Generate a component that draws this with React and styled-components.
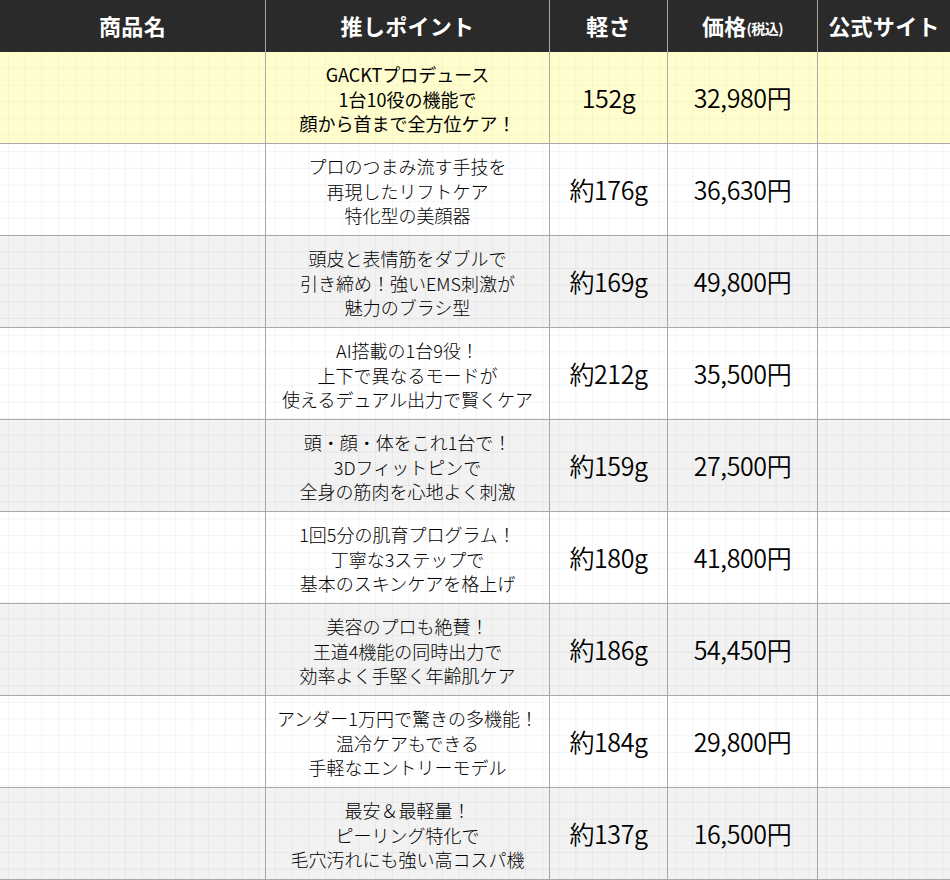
import React from 'react';
import styled, { createGlobalStyle } from 'styled-components';

const GlobalStyle = createGlobalStyle`
  html, body {
    margin: 0;
    padding: 0;
    background: #ffffff;
  }
  body {
    font-family: "Noto Sans CJK JP", "Noto Sans", sans-serif;
    color: #1a1a1a;
  }
`;

const Table = styled.div`
  width: 950px;
  display: grid;
  grid-template-columns: 265px 284px 118px 150px 1fr;
  background-color: #ffffff;
  background-image:
    linear-gradient(to right, rgba(0, 0, 0, 0.042) 1px, transparent 1px),
    linear-gradient(to bottom, rgba(0, 0, 0, 0.042) 1px, transparent 1px);
  background-size: 16.7px 16.7px;
  background-position: 8px 1px;
`;

const HeadCell = styled.div`
  height: 52px;
  background: #2a2a2a;
  color: #ffffff;
  font-weight: 700;
  font-size: 22px;
  display: flex;
  align-items: center;
  justify-content: center;
  letter-spacing: 0.3px;
  border-left: ${(p) => (p.$first ? 'none' : '1px solid #a8a8a8')};
  padding-bottom: 2px;
  box-sizing: border-box;

  small {
    font-size: 14px;
    letter-spacing: -0.5px;
    margin-top: 5px;
  }
`;

const tints = {
  yellow: 'rgba(255, 250, 120, 0.36)',
  white: 'transparent',
  grey: 'rgba(0, 0, 0, 0.05)',
};

const Cell = styled.div`
  height: 92px;
  box-sizing: border-box;
  border-bottom: 1px solid #a8a8a8;
  border-left: ${(p) => (p.$first ? 'none' : '1px solid #a8a8a8')};
  background: ${(p) => tints[p.$tint]};
  display: flex;
  align-items: center;
  justify-content: center;
  text-align: center;
`;

const Point = styled(Cell)`
  font-size: 18px;
  line-height: 24.5px;
  font-weight: ${(p) => (p.$tint === 'yellow' ? 400 : 300)};
  color: #000000;
  padding-top: 3px;
`;

const Value = styled(Cell)`
  font-size: 25px;
  font-weight: 350;
  color: #000000;
  letter-spacing: -0.4px;
  padding-bottom: 2px;
`;

const rows = [
  { point: ['GACKTプロデュース', '1台10役の機能で', '顔から首まで全方位ケア！'], weight: '152g', price: '32,980円' },
  { point: ['プロのつまみ流す手技を', '再現したリフトケア', '特化型の美顔器'], weight: '約176g', price: '36,630円' },
  { point: ['頭皮と表情筋をダブルで', '引き締め！強いEMS刺激が', '魅力のブラシ型'], weight: '約169g', price: '49,800円' },
  { point: ['AI搭載の1台9役！', '上下で異なるモードが', '使えるデュアル出力で賢くケア'], weight: '約212g', price: '35,500円' },
  { point: ['頭・顔・体をこれ1台で！', '3Dフィットピンで', '全身の筋肉を心地よく刺激'], weight: '約159g', price: '27,500円' },
  { point: ['1回5分の肌育プログラム！', '丁寧な3ステップで', '基本のスキンケアを格上げ'], weight: '約180g', price: '41,800円' },
  { point: ['美容のプロも絶賛！', '王道4機能の同時出力で', '効率よく手堅く年齢肌ケア'], weight: '約186g', price: '54,450円' },
  { point: ['アンダー1万円で驚きの多機能！', '温冷ケアもできる', '手軽なエントリーモデル'], weight: '約184g', price: '29,800円' },
  { point: ['最安＆最軽量！', 'ピーリング特化で', '毛穴汚れにも強い高コスパ機'], weight: '約137g', price: '16,500円' },
];

const App = () => {
  return (
    <>
      <GlobalStyle />
      <Table>
        <HeadCell $first>商品名</HeadCell>
        <HeadCell>推しポイント</HeadCell>
        <HeadCell>軽さ</HeadCell>
        <HeadCell>
          価格<small>(税込)</small>
        </HeadCell>
        <HeadCell>公式サイト</HeadCell>

        {rows.map((row, i) => {
          const tint = i === 0 ? 'yellow' : i % 2 === 0 ? 'grey' : 'white';
          return (
            <React.Fragment key={row.price}>
              <Cell $first $tint={tint} />
              <Point $tint={tint}>
                <div>
                  {row.point.map((line) => (
                    <div key={line}>{line}</div>
                  ))}
                </div>
              </Point>
              <Value $tint={tint}>{row.weight}</Value>
              <Value $tint={tint}>{row.price}</Value>
              <Cell $tint={tint} />
            </React.Fragment>
          );
        })}
      </Table>
    </>
  );
};

export default App;
